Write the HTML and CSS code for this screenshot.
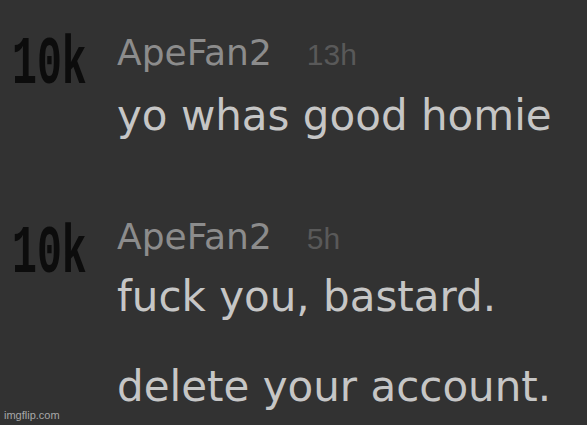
FILE: index.html
```html
<!DOCTYPE html>
<html>
<head>
<meta charset="utf-8">
<link rel="stylesheet" href="styles.css">
</head>
<body>
<div class="feed">
  <div class="comment first">
    <div class="score">10k</div>
    <div class="content">
      <div class="meta"><span class="user">ApeFan2</span><span class="time">13h</span></div>
      <p class="msg">yo whas good homie</p>
    </div>
  </div>
  <div class="comment second">
    <div class="score">10k</div>
    <div class="content">
      <div class="meta"><span class="user">ApeFan2</span><span class="time">5h</span></div>
      <p class="msg">fuck you, bastard.</p>
      <p class="msg para">delete your account.</p>
    </div>
  </div>
</div>
<div class="watermark">imgflip.com</div>
</body>
</html>
```
FILE: styles.css
```css
html, body {
  margin: 0;
  padding: 0;
  background: #323232;
  width: 587px;
  height: 425px;
  overflow: hidden;
}
body {
  position: relative;
  font-family: "DejaVu Sans", sans-serif;
}
.feed {
  display: flex;
  flex-direction: column;
  padding-top: 33px;
}
.comment {
  display: flex;
  align-items: flex-start;
}
.second {
  margin-top: 76px;
}
.score {
  width: 117px;
  flex: none;
  font-family: "Liberation Mono", monospace;
  font-weight: bold;
  font-size: 68px;
  line-height: 60px;
  color: #0c0c0c;
  transform: scaleX(0.61);
  transform-origin: 12px 0;
  padding-left: 12px;
  box-sizing: border-box;
}
.first .score { margin-top: 2px; }
.second .score { margin-top: 7px; }
.content {
  display: flex;
  flex-direction: column;
}
.meta {
  display: flex;
  align-items: baseline;
  gap: 35px;
  height: 40px;
}
.user {
  font-size: 36px;
  line-height: 40px;
  color: #8c8c8c;
}
.time {
  font-family: "Liberation Sans", sans-serif;
  font-size: 30px;
  line-height: 40px;
  color: #595959;
}
.msg {
  margin: 0;
  font-size: 42px;
  line-height: 50px;
  color: #c6c6c6;
}
.first .msg { margin-top: 18px; }
.second .msg { margin-top: 15px; }
.second .msg.para { margin-top: 40px; }
.watermark {
  position: absolute;
  left: 4px;
  bottom: 4px;
  font-family: "Liberation Sans", sans-serif;
  font-size: 11px;
  line-height: 12px;
  color: #a8a8a8;
}
```
